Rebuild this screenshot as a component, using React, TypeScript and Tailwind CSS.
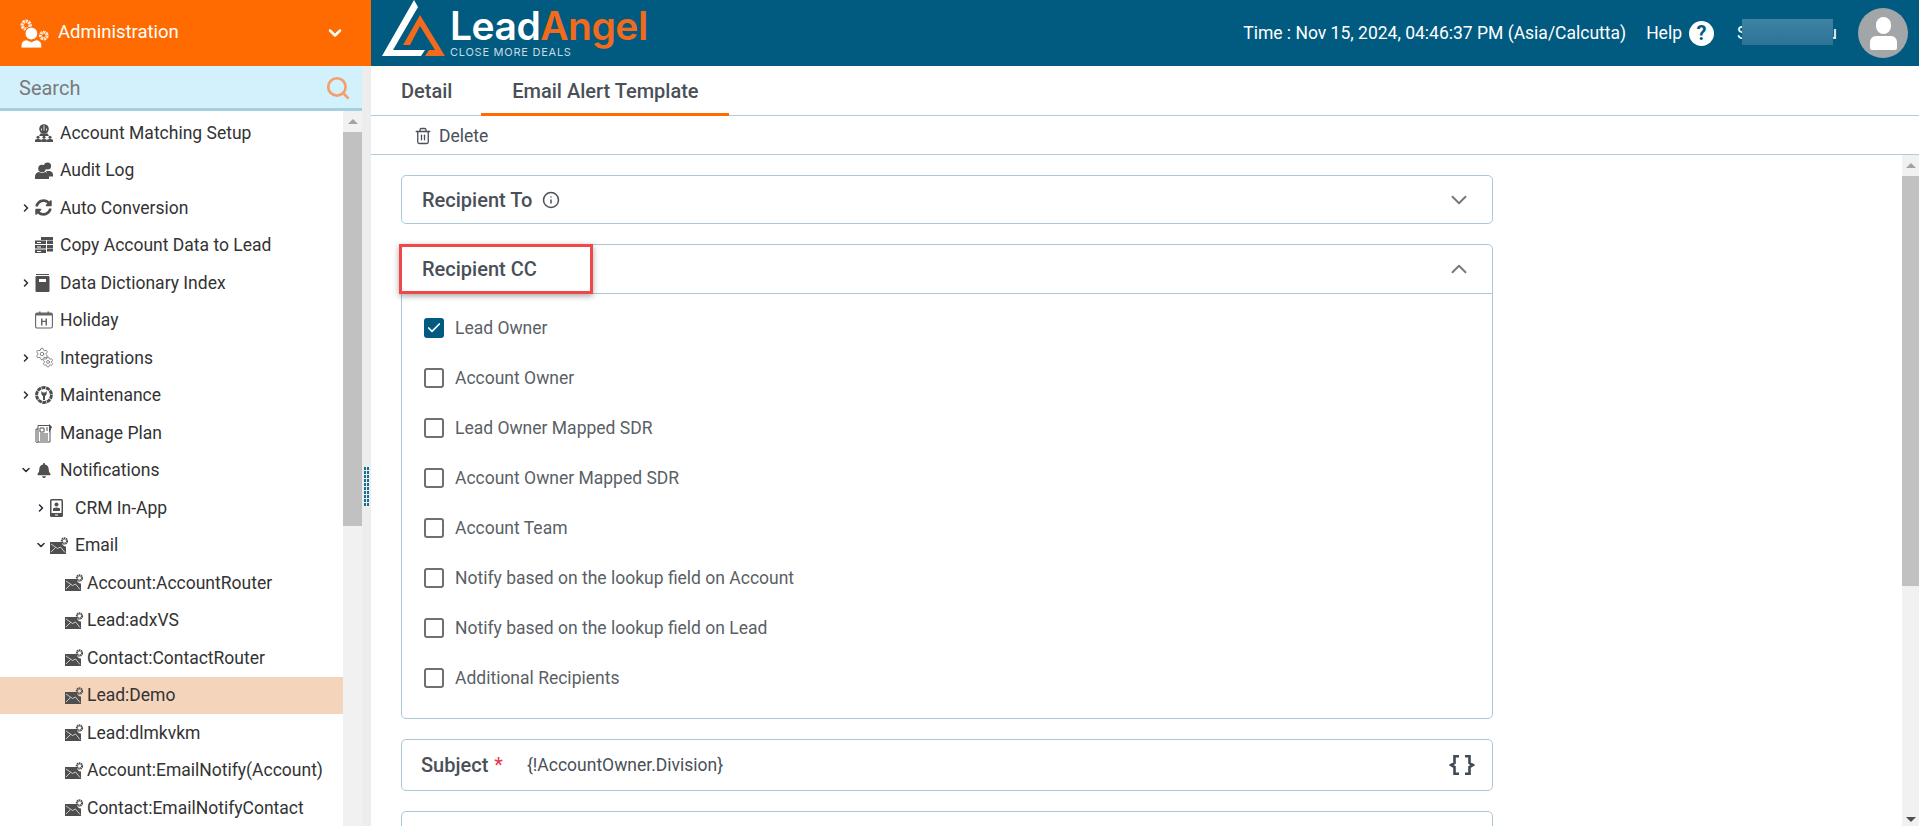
import { ReactNode } from 'react';
import { ChevronDown, ChevronRight, ChevronUp, Search, Trash2, Info, Check, Settings } from 'lucide-react';
import { FaBell, FaSyncAlt } from 'react-icons/fa';

const iconFill = '#4f4f4f';

const MatchIcon = () => (
    <svg viewBox="0 0 18 18" className="w-[18px] h-[18px]" fill={iconFill}>
        <circle cx="9" cy="5" r="4.800" />
        <path d="M5.500 9.500h7l1.500 2.500H4z" />
        <path d="M8.500 1.500h1v5h-1zM6 4.500h1v2H6zM11 4.500h1v2h-1z" fill="#ddd" />
        <circle cx="3" cy="13.200" r="1.500" /><circle cx="9" cy="13.200" r="1.500" /><circle cx="15" cy="13.200" r="1.500" />
        <path d="M0 18v-2q0-1 3-1t3 1v2zM6.200 18v-2q0-1 2.800-1t2.800 1v2zM12 18v-2q0-1 3-1t3 1v2z" />
    </svg>
);

const AuditIcon = () => (
    <svg viewBox="0 0 18 17" className="w-[18px] h-[17px]" fill={iconFill}>
        <circle cx="12.500" cy="4" r="3.600" />
        <path d="M11 9h3.500q3.500.5 3.500 4v1.500h-4z" />
        <circle cx="7" cy="6.500" r="3.800" />
        <path d="M0 17v-2.500q0-3.500 3.500-4.500l3.500 1 3.500-1q3.500 1 3.500 4.500V17z" />
    </svg>
);

const ServerIcon = () => (
    <svg viewBox="0 0 18 18" className="w-[18px] h-[18px]" fill={iconFill}>
        <path d="M0 4.500h11V8H0zM0 9h11v3.500H0zM0 13.500h11V17H0z" />
        <path d="M6 1h12v3H6zM12 4.500h6V8h-6zM12 9h6v3h-6zM12 12.500h6v3h-6z" />
        <path d="M2 6h4v1H2zM2 10.500h4v1H2zM2 15h4v1H2z" fill="#fff" />
    </svg>
);

const BookIcon = () => (
    <svg viewBox="0 0 15 18" className="w-[15px] h-[18px]" fill={iconFill}>
        <path d="M1 0h13v1H1z" />
        <rect x="0.500" y="2" width="14" height="16" rx="1" />
        <path d="M4 5h7v3H4z" fill="#fff" />
    </svg>
);

const HolidayIcon = () => (
    <svg viewBox="0 0 18 18" className="w-[18px] h-[18px]">
        <rect x="0.600" y="2" width="16.800" height="15" rx="1.500" fill="none" stroke="#666" strokeWidth="1.100" />
        <path d="M1 2h16v2.500H1z" fill="#666" />
        <path d="M4 0.500h1.500V3H4zM12.500 0.500H14V3h-1.500z" fill="#666" />
        <path d="M6 7.500h1.500v2.200h3V7.500H12v7h-1.500V11h-3v3.500H6z" fill="#666" />
    </svg>
);

const GearsIcon = () => (
    <svg viewBox="0 0 19 21" className="w-[19px] h-[21px]">
        <Settings x={0} y={0} width={14} height={14} stroke="#6b6b6b" strokeWidth={1.4} />
        <Settings x={7} y={9} width={12} height={12} stroke="#6b6b6b" strokeWidth={1.5} />
    </svg>
);

const MaintenanceIcon = () => (
    <svg viewBox="0 0 18 18" className="w-[18px] h-[18px]">
        <circle cx="9" cy="9" r="7.400" fill="none" stroke={iconFill} strokeWidth="3" strokeDasharray="4 0.600" />
        <circle cx="9" cy="9" r="5.500" fill="#fff" />
        <path d="M6.300 5v2.500a2.600 2.600 0 0 0 1.700 2.400V14h2V9.900a2.600 2.600 0 0 0 1.700-2.400V5L10.200 6.500H7.800z" fill={iconFill} />
    </svg>
);

const PlanIcon = () => (
    <svg viewBox="0 0 18 20" className="w-[18px] h-[20px]" fill="none" stroke="#555" strokeWidth="1">
        <path d="M3 2.500h12V19H3zM3 6H1v12a1 1 0 0 0 2 1" />
        <path d="M5 5h4v4H5zM5 11h8M5 13h8M5 15h8M5 17h8M11 5h2M11 7h2" />
        <path d="M14 1l3 3-3 6z" fill={iconFill} stroke="none" />
    </svg>
);

const PhoneIcon = () => (
    <svg viewBox="0 0 13 18" className="w-[13px] h-[18px]">
        <rect x="0" y="0" width="13" height="18" rx="1.500" fill={iconFill} />
        <rect x="1.500" y="1.500" width="10" height="12.500" fill="#fff" />
        <circle cx="6.500" cy="5.500" r="2" fill={iconFill} />
        <path d="M3 12v-2q0-1.500 3.500-1.500T10 10v2z" fill={iconFill} />
        <rect x="5" y="15.500" width="3" height="1" fill="#fff" />
    </svg>
);

const MailGearIcon = () => (
    <svg viewBox="0 0 18 17" className="w-[18px] h-[17px]">
        <path d="M0 5h12a4 4 0 0 0 4 4.500V17H0z" fill={iconFill} />
        <path d="M1 7l6.500 4.500 3-1.500 4.500 5.500M1 15l4.500-4.500" fill="none" stroke="#fff" strokeWidth="0.700" />
        <circle cx="14.500" cy="4" r="2.600" fill="none" stroke={iconFill} strokeWidth="2.200" strokeDasharray="1.400 0.500" />
    </svg>
);

type Row = { label: string; icon: ReactNode; depth: number; toggle?: 'open' | 'closed'; active?: boolean };

const rows: Row[] = [
    { label: 'Account Matching Setup', icon: <MatchIcon />, depth: 0 },
    { label: 'Audit Log', icon: <AuditIcon />, depth: 0 },
    { label: 'Auto Conversion', icon: <FaSyncAlt className="w-[17px] h-[17px] text-[#4f4f4f]" />, depth: 0, toggle: 'closed' },
    { label: 'Copy Account Data to Lead', icon: <ServerIcon />, depth: 0 },
    { label: 'Data Dictionary Index', icon: <BookIcon />, depth: 0, toggle: 'closed' },
    { label: 'Holiday', icon: <HolidayIcon />, depth: 0 },
    { label: 'Integrations', icon: <GearsIcon />, depth: 0, toggle: 'closed' },
    { label: 'Maintenance', icon: <MaintenanceIcon />, depth: 0, toggle: 'closed' },
    { label: 'Manage Plan', icon: <PlanIcon />, depth: 0 },
    { label: 'Notifications', icon: <FaBell className="w-[14px] h-[15px] ml-[2px] text-[#4f4f4f]" />, depth: 0, toggle: 'open' },
    { label: 'CRM In-App', icon: <PhoneIcon />, depth: 1, toggle: 'closed' },
    { label: 'Email', icon: <MailGearIcon />, depth: 1, toggle: 'open' },
    { label: 'Account:AccountRouter', icon: <MailGearIcon />, depth: 2 },
    { label: 'Lead:adxVS', icon: <MailGearIcon />, depth: 2 },
    { label: 'Contact:ContactRouter', icon: <MailGearIcon />, depth: 2 },
    { label: 'Lead:Demo', icon: <MailGearIcon />, depth: 2, active: true },
    { label: 'Lead:dlmkvkm', icon: <MailGearIcon />, depth: 2 },
    { label: 'Account:EmailNotify(Account)', icon: <MailGearIcon />, depth: 2 },
    { label: 'Contact:EmailNotifyContact', icon: <MailGearIcon />, depth: 2 },
];

const recipients = [
    'Lead Owner',
    'Account Owner',
    'Lead Owner Mapped SDR',
    'Account Owner Mapped SDR',
    'Account Team',
    'Notify based on the lookup field on Account',
    'Notify based on the lookup field on Lead',
    'Additional Recipients',
];

const TreeRow = ({ row }: { row: Row }) => {
    const pad = row.depth === 0 ? 'pl-[20px]' : row.depth === 1 ? 'pl-[35px]' : 'pl-[65px]';
    return (
        <div className={`flex items-center shrink-0 h-[37.5px] text-[17.5px] text-[#333] ${pad} ${row.active ? 'bg-[#f5d4bc]' : ''}`}>
            {row.depth < 2 && (
                <span className="w-[15px] flex justify-start shrink-0">
                    {row.toggle === 'closed' && <ChevronRight className="w-[12px] h-[12px] text-[#1f2d3d]" strokeWidth={3} />}
                    {row.toggle === 'open' && <ChevronDown className="w-[12px] h-[12px] text-[#1f2d3d]" strokeWidth={3} />}
                </span>
            )}
            <span className={`${row.depth < 2 ? 'w-[25px]' : 'w-[22px]'} flex justify-start shrink-0`}>{row.icon}</span>
            <span className="whitespace-nowrap">{row.label}</span>
        </div>
    );
};

const ScrollBar = ({ width, thumb, downArrow }: { width: string; thumb: string; downArrow?: boolean }) => (
    <div className={`${width} shrink-0 bg-[#f1f1f1] flex flex-col items-center`}>
        <div className="h-[21px] flex items-center justify-center shrink-0">
            <div className="w-0 h-0 border-x-[5px] border-x-transparent border-b-[5px] border-b-[#a3a3a3]" />
        </div>
        <div className={`w-full ${thumb} bg-[#c1c1c1] shrink-0`} />
        <div className="flex-1" />
        {downArrow && (
            <div className="h-[14px] flex items-center justify-center shrink-0">
                <div className="w-0 h-0 border-x-[5px] border-x-transparent border-t-[5px] border-t-[#505050]" />
            </div>
        )}
    </div>
);

const Sidebar = () => (
    <aside className="w-[371px] shrink-0 flex bg-[#ededed] min-h-0">
        <div className="w-[362px] shrink-0 flex flex-col bg-white min-h-0">
            <div className="h-[45px] shrink-0 bg-[#d3f1fd] border-b-[3px] border-[#a5cfe0] flex items-center justify-between pl-[19px] pr-[11px] pt-[2px]">
                <span className="text-[20px] text-[#7a7a7a]">Search</span>
                <Search className="w-[26px] h-[26px] text-[#f2a06e]" strokeWidth={2.5} />
            </div>
            <div className="flex flex-1 min-h-0">
                <div className="w-[343px] shrink-0 flex flex-col pt-[3px] overflow-hidden">
                    {rows.map((row) => (
                        <TreeRow key={row.label} row={row} />
                    ))}
                </div>
                <ScrollBar width="w-[19px]" thumb="h-[394px]" />
            </div>
        </div>
        <div className="flex-1 flex flex-col items-center justify-center pt-[80px]">
            <div className="grid grid-cols-2 gap-[1px]">
                {Array.from({ length: 20 }).map((_, i) => (
                    <span key={i} className="w-[2px] h-[3px] bg-[#1c6f94]" />
                ))}
            </div>
        </div>
    </aside>
);

const Logo = () => (
    <div className="flex items-start pl-[5px] h-full">
        <svg viewBox="0 0 74 60" className="w-[74px] h-[60px] shrink-0">
            <path d="M38 0L6 56h39l4-6H17L42 7z" fill="#fff" />
            <path d="M27 45L44 15l25 41H49l4-6h6L44 26 34 45z" fill="#f26a1b" />
        </svg>
        <div className="flex flex-col pt-[7px]">
            <div className="text-[39px] leading-[38px] font-semibold tracking-[-0.5px] font-['Inter',sans-serif]">
                <span className="text-white">Lead</span>
                <span className="text-[#f26a1b]">Angel</span>
            </div>
            <div className="mt-[1px] text-[11px] leading-[12px] tracking-[0.75px] text-[#c9dbe4] font-['Inter',sans-serif]">CLOSE MORE DEALS</div>
        </div>
    </div>
);

const Header = () => (
    <header className="h-[66px] shrink-0 flex bg-[#015a80]">
        <div className="w-[371px] shrink-0 bg-[#ff6b00] flex items-center text-white pl-[20px] pr-[26px]">
            <svg viewBox="0 0 28 28" className="w-[29px] h-[29px] shrink-0 mr-[9px]">
                <circle cx="6" cy="6" r="3.800" fill="none" stroke="#fde6d4" strokeWidth="3.400" strokeDasharray="2.200 0.600" />
                <circle cx="23" cy="16" r="3.200" fill="none" stroke="#fde6d4" strokeWidth="3" strokeDasharray="2.200 0.600" />
                <circle cx="11" cy="14" r="6.200" fill="#fff" stroke="#ff6b00" strokeWidth="1" />
                <path d="M1 28v-2q0-5 5-6l5 2 5-2q5 1 5 6v2z" fill="#fff" stroke="#ff6b00" strokeWidth="0.800" />
            </svg>
            <span className="text-[18.5px]">Administration</span>
            <ChevronDown className="w-[20px] h-[20px] ml-auto" strokeWidth={3} />
        </div>
        <Logo />
        <div className="ml-auto flex items-center text-white text-[17.5px] pr-[11px]">
            <span className="whitespace-nowrap">Time : Nov 15, 2024, 04:46:37 PM (Asia/Calcutta)</span>
            <span className="ml-[20px]">Help</span>
            <span className="ml-[7px] w-[25px] h-[25px] rounded-full bg-white flex items-center justify-center text-[#015a80] text-[20px] font-bold">?</span>
            <div className="relative ml-[23px] w-[100px] whitespace-nowrap flex justify-between">
                <span>S</span>
                <span>u</span>
                <div className="absolute left-[5px] top-[-1px] w-[91px] h-[26px] bg-gradient-to-b from-[#3f83a2] to-[#2c7397]" />
            </div>
            <div className="ml-[21px] w-[50px] h-[50px] rounded-full bg-[#a3a6a9] flex flex-col items-center justify-center">
                <span className="w-[15px] h-[17px] rounded-full bg-white" />
                <span className="w-[27px] h-[14px] rounded-t-[6px] rounded-b-[2px] bg-white mt-[2px]" />
            </div>
        </div>
    </header>
);

const Checkbox = ({ checked }: { checked: boolean }) =>
    checked ? (
        <span className="w-[20px] h-[20px] rounded-[3px] bg-[#015a80] flex items-center justify-center shrink-0">
            <Check className="w-[16px] h-[16px] text-white" strokeWidth={2.5} />
        </span>
    ) : (
        <span className="w-[20px] h-[20px] rounded-[3px] border-2 border-[#707070] shrink-0" />
    );

const BraceIcon = () => (
    <svg viewBox="0 0 26 20" className="w-[26px] h-[20px] ml-auto" fill="none" stroke="#3f4a55" strokeWidth="2.600">
        <path d="M10 1.300H5.500V8L2 10l3.500 2v6.700H10" />
        <path d="M16 1.300h4.500V8l3.500 2-3.500 2v6.700H16" />
    </svg>
);

const cardClass = 'w-[1092px] shrink-0 border border-[#aac8d6] rounded-[5px] bg-white';

const Main = () => (
    <main className="flex-1 min-w-0 flex flex-col bg-white">
        <div className="h-[50px] shrink-0 border-b border-[#b0ccda] flex items-end text-[20px] font-medium text-[#4a5058]">
            <div className="h-[49px] flex items-center pl-[30px] pr-[29px] pt-[1px]">Detail</div>
            <div className="h-[49px] w-[248px] flex items-center justify-center border-b-[3px] border-[#ff6b00] -mb-[1px] pt-[1px]">Email Alert Template</div>
        </div>
        <div className="h-[39px] shrink-0 border-b border-[#b0ccda] flex items-center pl-[43px] pt-[2px] text-[17.5px] text-[#4a5058]">
            <Trash2 className="w-[18px] h-[18px] mr-[7px]" strokeWidth={1.75} />
            Delete
        </div>
        <div className="flex flex-1 min-h-0">
            <div className="flex-1 min-w-0 overflow-hidden pl-[30px] pt-[20px] flex flex-col gap-[20px]">
                <div className={`${cardClass} h-[49px] flex items-center justify-between pl-[20px] pr-[20px]`}>
                    <div className="flex items-center gap-[10px] text-[20px] font-medium text-[#4a5058]">
                        Recipient To
                        <Info className="w-[18px] h-[18px]" strokeWidth={2} />
                    </div>
                    <ChevronDown className="w-[26px] h-[26px] text-[#777]" strokeWidth={1.75} />
                </div>
                <div className={`${cardClass} h-[475px] relative`}>
                    <div className="h-[49px] border-b border-[#aac8d6] flex items-center justify-between pl-[20px] pr-[20px] text-[20px] font-medium text-[#4a5058]">
                        Recipient CC
                        <ChevronUp className="w-[26px] h-[26px] text-[#777]" strokeWidth={1.75} />
                    </div>
                    <div className="flex flex-col pt-[9px]">
                        {recipients.map((name, i) => (
                            <div key={name} className="h-[50px] flex items-center gap-[11px] pl-[22px] text-[17.5px] text-[#5a5f66]">
                                <Checkbox checked={i === 0} />
                                {name}
                            </div>
                        ))}
                    </div>
                    <div className="absolute left-[-3px] top-[-1px] w-[194px] h-[50px] border-[3px] border-[#f04848] shadow-[0_2px_6px_rgba(0,0,0,0.35)]" />
                </div>
                <div className={`${cardClass} h-[52px] flex items-center pl-[19px] pr-[17px]`}>
                    <span className="text-[20px] font-medium text-[#4a5058]">Subject</span>
                    <span className="text-[20px] text-[#e8344a] ml-[6px]">*</span>
                    <span className="text-[17.5px] text-[#4a5058] ml-[24px]">{'{!AccountOwner.Division}'}</span>
                    <BraceIcon />
                </div>
                <div className={`${cardClass} h-[80px]`} />
            </div>
            <ScrollBar width="w-[17px]" thumb="h-[410px]" downArrow />
        </div>
    </main>
);

export default function App() {
    return (
        <div className="w-full h-screen flex flex-col overflow-hidden bg-white font-['Roboto',sans-serif]">
            <Header />
            <div className="flex flex-1 min-h-0">
                <Sidebar />
                <Main />
            </div>
        </div>
    );
}
